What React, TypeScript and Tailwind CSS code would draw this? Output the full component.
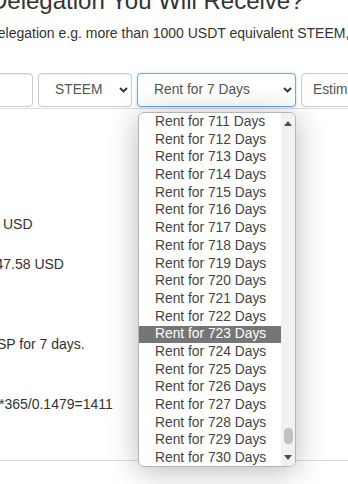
import type { ReactNode } from "react";

const days = Array.from({ length: 20 }, (_, i) => 711 + i);
const ACTIVE = 723;

function Chevron() {
  return (
    <svg width="9" height="6" viewBox="0 0 9 6" className="shrink-0">
      <path d="M1 1l3.5 3.5L8 1" fill="none" stroke="#333" strokeWidth="1.9" />
    </svg>
  );
}

function SelectBox({
  width,
  focused,
  children,
}: {
  width: string;
  focused?: boolean;
  children: ReactNode;
}) {
  return (
    <div
      className={`flex h-[34px] shrink-0 items-center justify-between rounded-[4px] border bg-white pl-[16px] pr-[3px] text-[13.8px] text-[#555] ${width} ${
        focused
          ? "border-[#6aa8e6] shadow-[0_0_3px_rgba(102,175,233,0.45)]"
          : "border-[#ccc] shadow-[inset_0_1px_1px_rgba(0,0,0,0.075)]"
      }`}
    >
      <span className="whitespace-nowrap">{children}</span>
      <Chevron />
    </div>
  );
}

function DaysDropdown() {
  return (
    <div className="absolute left-[138px] top-[112px] flex h-[355px] w-[158px] overflow-hidden rounded-[6px] border border-[#b5b5b5] bg-white shadow-[0_4px_30px_rgba(0,0,0,0.28)]">
      <ul className="flex-1 pt-[0.5px] text-[13.8px]">
        {days.map((d) => (
          <li
            key={d}
            className={`flex h-[17.7px] items-center whitespace-nowrap pl-[16px] ${
              d === ACTIVE ? "bg-[#767676] text-white" : "text-[#444]"
            }`}
          >
            Rent for {d} Days
          </li>
        ))}
      </ul>
      {/* scrollbar */}
      <div className="flex w-[14px] flex-col items-center justify-between bg-[#f1f1f1] pb-[6px] pt-[8px]">
        <div className="h-0 w-0 border-x-[4px] border-b-[5px] border-x-transparent border-b-[#505050]" />
        <div className="mb-[11px] mt-auto h-[16px] w-[9px] rounded-full bg-[#c1c1c1]" />
        <div className="h-0 w-0 border-x-[4px] border-t-[5px] border-x-transparent border-t-[#505050]" />
      </div>
    </div>
  );
}

export default function App() {
  return (
    <div className="relative h-[484px] w-[348px] overflow-hidden bg-white font-['Liberation_Sans',Arial,sans-serif] text-[#333]">
      <div className="-ml-[10px]">
        <h3 className="-mt-[12px] whitespace-nowrap text-[24px] leading-[26px]">
          Delegation You Will Receive?
        </h3>
        <p className="mt-[9px] whitespace-nowrap text-[14px] leading-[20px]">
          delegation e.g. more than 1000 USDT equivalent STEEM, you will get a bonus.
        </p>
      </div>

      <div className="-ml-[61px] mt-[30px] flex gap-[5px]">
        <div className="h-[34px] w-[94px] shrink-0 rounded-[4px] border border-[#ccc] shadow-[inset_0_1px_1px_rgba(0,0,0,0.075)]" />
        <SelectBox width="w-[94px]">STEEM</SelectBox>
        <SelectBox width="w-[159px]" focused>
          Rent for 7 Days
        </SelectBox>
        <div className="flex h-[34px] w-[150px] shrink-0 items-center whitespace-nowrap rounded-[4px] border border-[#ccc] pl-[11px] text-[13.8px] text-[#555]">
          Estimated APR
        </div>
      </div>

      <div className="mt-px border-t border-[#ddd]">
        <div className="flex h-[351px] flex-col items-start text-[14px] leading-[20px]">
          <p className="ml-[3px] mt-[105px] whitespace-nowrap">USD</p>
          <p className="-ml-[4.5px] mt-[20px] whitespace-nowrap">47.58 USD</p>
          <p className="-ml-[3px] mt-[60px] whitespace-nowrap">SP for 7 days.</p>
          <p className="-ml-[1px] mt-[40px] whitespace-nowrap">*365/0.1479=1411</p>
        </div>
        <div className="border-t border-[#ddd]" />
      </div>

      <DaysDropdown />
    </div>
  );
}
